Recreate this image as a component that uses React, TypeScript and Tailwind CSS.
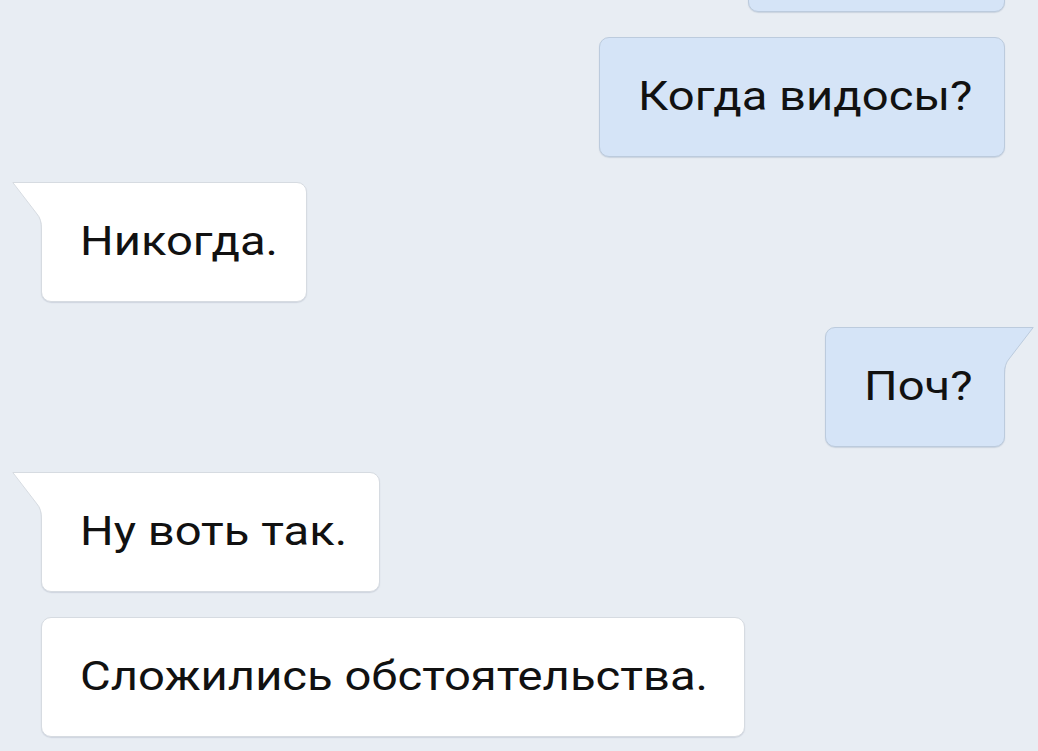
import React from "react";

type Msg = { text: string; out: boolean; tail: boolean; w: string };

const msgs: Msg[] = [
  { text: "Когда видосы?", out: true, tail: false, w: "w-[406px]" },
  { text: "Никогда.", out: false, tail: true, w: "w-[266px]" },
  { text: "Поч?", out: true, tail: true, w: "w-[180px]" },
  { text: "Ну воть так.", out: false, tail: true, w: "w-[339px]" },
  { text: "Сложились обстоятельства.", out: false, tail: false, w: "w-[704px]" },
];

function TailLeft() {
  return (
    <svg
      className="absolute left-[-30px] top-[-1px]"
      width="31"
      height="47"
      viewBox="0 0 31 47"
    >
      <path d="M0.5 0.5 H31 V47 H29.5 V44 Q29.5 37 25 32 Z" fill="#ffffff" />
      <path
        d="M31 0.5 H0.8 L25 32 Q29.5 37 29.5 47"
        fill="none"
        stroke="#d6dbe1"
        strokeWidth="1"
      />
    </svg>
  );
}

function TailRight() {
  return (
    <svg
      className="absolute right-[-30px] top-[-1px]"
      width="31"
      height="47"
      viewBox="0 0 31 47"
    >
      <path d="M30.5 0.5 H0 V47 H1.5 V44 Q1.5 37 6 32 Z" fill="#d5e4f7" />
      <path
        d="M0 0.5 H30.2 L6 32 Q1.5 37 1.5 47"
        fill="none"
        stroke="#bccbdd"
        strokeWidth="1"
      />
    </svg>
  );
}

function Text({ children }: { children: React.ReactNode }) {
  return (
    <span className="inline-block origin-left scale-x-[1.18] whitespace-nowrap text-[40px] leading-none text-[#111]">
      {children}
    </span>
  );
}

function Bubble({ m }: { m: Msg }) {
  if (m.out) {
    return (
      <div className="flex justify-end pr-[33px]">
        <div
          className={
            "relative flex h-[120px] items-center border border-[#bccbdd] bg-[#d5e4f7] pl-[38px] shadow-[0_1px_1px_rgba(150,165,185,0.35)] " +
            m.w +
            " " +
            (m.tail ? "rounded-[10px] rounded-tr-none" : "rounded-[10px]")
          }
        >
          {m.tail && <TailRight />}
          <Text>{m.text}</Text>
        </div>
      </div>
    );
  }
  return (
    <div className="flex justify-start pl-[41px]">
      <div
        className={
          "relative flex h-[120px] items-center border border-[#d6dbe1] bg-white pl-[38px] shadow-[0_1px_1px_rgba(160,170,185,0.35)] " +
          m.w +
          " " +
          (m.tail ? "rounded-[10px] rounded-tl-none" : "rounded-[10px]")
        }
      >
        {m.tail && <TailLeft />}
        <Text>{m.text}</Text>
      </div>
    </div>
  );
}

export default function App() {
  return (
    <div
      className="h-[751px] w-[1038px] overflow-hidden bg-[#e8edf3]"
      style={{ fontFamily: "Roboto, 'Noto Sans', sans-serif" }}
    >
      <div className="-mt-[108px] flex flex-col gap-[25px]">
        <div className="flex justify-end pr-[33px]">
          <div className="h-[120px] w-[257px] rounded-[10px] border border-[#bccbdd] bg-[#d5e4f7] shadow-[0_1px_1px_rgba(150,165,185,0.35)]" />
        </div>
        {msgs.map((m, i) => (
          <Bubble key={i} m={m} />
        ))}
      </div>
    </div>
  );
}
